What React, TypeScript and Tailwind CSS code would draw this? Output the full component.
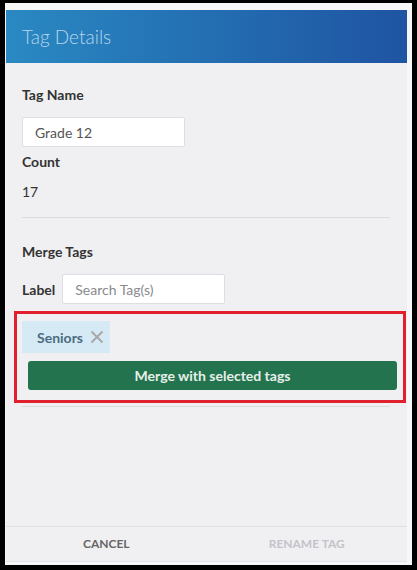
const Field = ({ value, placeholder, width }: { value?: string; placeholder?: string; width: string }) => (
  <div
    className={`${width} h-[30px] bg-white border border-[#dedee2] rounded-[2px] flex items-center px-3 text-[14px] ${
      value ? "text-[#555]" : "text-[#8a8a8e]"
    }`}
  >
    {value ?? placeholder}
  </div>
);

const TagDetails = () => {
  return (
    <div className="w-[417px] h-[570px] bg-black pt-[3px] pl-[5px] font-['Lato','Open_Sans',sans-serif]">
      <div className="w-[407px] h-[562px] bg-[#f7f7f9] pt-[7px] pl-px pr-[5px] pb-[3px] flex flex-col">
        <div className="flex-1 flex flex-col bg-[#f0f0f2] border-b border-[#e4e4e8]">
          {/* Header */}
          <header className="h-[53px] flex items-center px-4 bg-gradient-to-r from-[#2a89c2] to-[#1f54a2]">
            <h1 className="text-[19px] font-light text-[#b8d5ec] leading-none">Tag Details</h1>
          </header>

          {/* Body */}
          <section className="flex-1 flex flex-col pl-4 pr-[17px] pt-[22px] text-[#333]">
            <label className="text-[14px] leading-5 font-bold">Tag Name</label>
            <div className="mt-3">
              <Field value="Grade 12" width="w-[163px]" />
            </div>
            <label className="mt-[5px] text-[14px] leading-5 font-bold">Count</label>
            <p className="mt-[10px] text-[14px] leading-5">17</p>
            <hr className="mt-[15px] border-0 border-t border-[#dcdce0]" />

            <h2 className="mt-6 text-[14px] leading-5 font-bold">Merge Tags</h2>
            <div className="mt-3 flex items-center gap-[7px]">
              <span className="text-[14px] font-bold">Label</span>
              <Field placeholder="Search Tag(s)" width="w-[163px]" />
            </div>

            <div className="mt-[7px] -ml-2 -mr-4 border-[3px] border-[#e21f2c] pl-[5px] pt-[7px] pb-[10px]">
              <div className="flex">
                <span className="h-8 pl-[15px] pr-[6px] flex items-center gap-[7px] bg-[#d5eaf5] text-[14px] font-bold text-[#4c6c80]">
                  Seniors
                  <svg width="14" height="14" viewBox="0 0 14 14" className="text-[#a9a9ab]">
                    <path d="M1.5 1.5 12.5 12.5M12.5 1.5 1.5 12.5" stroke="currentColor" strokeWidth="2" />
                  </svg>
                </span>
              </div>
              <button className="mt-2 ml-[6px] w-[369px] h-[29px] rounded-[3px] bg-[#23744e] text-[14px] font-bold text-[#e6efe9] flex items-center justify-center">
                Merge with selected tags
              </button>
            </div>
            <hr className="mt-[3px] border-0 border-t border-[#dcdce0]" />
          </section>

          {/* Footer */}
          <footer className="h-[35px] grid grid-cols-2 border-t border-[#e0e0e4] text-[12px] font-bold">
            <button className="flex items-center justify-center uppercase text-[#666]">Cancel</button>
            <button className="flex items-center justify-center uppercase text-[#c3c3ca]">Rename Tag</button>
          </footer>
        </div>
      </div>
    </div>
  );
};

export default function App() {
  return <TagDetails />;
}
